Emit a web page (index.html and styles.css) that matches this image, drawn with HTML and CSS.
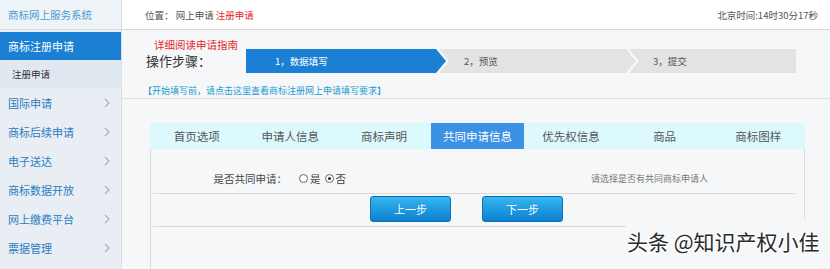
FILE: index.html
```html
<!DOCTYPE html>
<html lang="zh-CN">
<head>
  <meta charset="UTF-8">
  <title>商标网上服务系统</title>
  <link rel="stylesheet" href="styles.css">
</head>
<body>
  <div class="sidebar">
    <div class="brand">商标网上服务系统</div>
    <div class="menu-active">商标注册申请</div>
    <div class="menu-sub">注册申请</div>
    <div class="menu-item">国际申请<svg width="6" height="10" viewBox="0 0 6 10"><polyline points="1,1 5,5 1,9" fill="none" stroke="#a9b2ba" stroke-width="1.2"/></svg></div>
    <div class="menu-item">商标后续申请<svg width="6" height="10" viewBox="0 0 6 10"><polyline points="1,1 5,5 1,9" fill="none" stroke="#a9b2ba" stroke-width="1.2"/></svg></div>
    <div class="menu-item">电子送达<svg width="6" height="10" viewBox="0 0 6 10"><polyline points="1,1 5,5 1,9" fill="none" stroke="#a9b2ba" stroke-width="1.2"/></svg></div>
    <div class="menu-item">商标数据开放<svg width="6" height="10" viewBox="0 0 6 10"><polyline points="1,1 5,5 1,9" fill="none" stroke="#a9b2ba" stroke-width="1.2"/></svg></div>
    <div class="menu-item">网上缴费平台<svg width="6" height="10" viewBox="0 0 6 10"><polyline points="1,1 5,5 1,9" fill="none" stroke="#a9b2ba" stroke-width="1.2"/></svg></div>
    <div class="menu-item">票据管理<svg width="6" height="10" viewBox="0 0 6 10"><polyline points="1,1 5,5 1,9" fill="none" stroke="#a9b2ba" stroke-width="1.2"/></svg></div>
  </div>

  <div class="main">
    <div class="topbar">
      <div class="crumb">位置： 网上申请 <span class="red">注册申请</span></div>
      <div class="clock">北京时间:14时30分17秒</div>
    </div>

    <div class="steps">
      <div class="steps-left">
        <div class="guide">详细阅读申请指南</div>
        <div class="steps-label">操作步骤：</div>
      </div>
      <div class="step-bar">
        <div class="step step-first active">1，数据填写</div>
        <div class="step step-mid">2，预览</div>
        <div class="step step-last">3，提交</div>
      </div>
    </div>

    <div class="notice">【开始填写前，请点击这里查看商标注册网上申请填写要求】</div>

    <div class="form-box">
      <div class="tabs">
        <div class="tab">首页选项</div>
        <div class="tab">申请人信息</div>
        <div class="tab">商标声明</div>
        <div class="tab tab-active">共同申请信息</div>
        <div class="tab">优先权信息</div>
        <div class="tab">商品</div>
        <div class="tab">商标图样</div>
      </div>
      <div class="panel">
        <div class="form-row">
          <div class="field-label">是否共同申请：</div>
          <div class="radios">
            <span class="radio"></span>是
            <span class="radio checked"></span>否
          </div>
          <div class="hint">请选择是否有共同商标申请人</div>
        </div>
        <div class="button-row">
          <button class="btn">上一步</button>
          <button class="btn">下一步</button>
        </div>
      </div>
    </div>
  </div>

  <div class="watermark">头条 @知识产权小佳</div>
</body>
</html>
```

FILE: styles.css
```css
html, body {
  margin: 0;
  padding: 0;
  height: 100%;
  overflow: hidden;
  font-family: "Noto Sans CJK SC", "Noto Sans", sans-serif;
}

body {
  display: flex;
  background: #f5f7f9;
  position: relative;
}

/* sidebar */

.sidebar {
  width: 121px;
  flex: none;
  background: #e8eef4;
  border-right: 1px solid #d7dee5;
}

.brand {
  height: 29px;
  line-height: 29px;
  padding-left: 8px;
  font-size: 10.5px;
  color: #4b9ad2;
  background: #eef3f7;
  border-bottom: 1px solid #d5dbe0;
  margin-bottom: 2px;
}

.menu-active {
  height: 28px;
  line-height: 28px;
  padding-left: 8px;
  font-size: 11px;
  color: #fff;
  background: #1b7fd4;
}

.menu-sub {
  height: 28px;
  line-height: 28px;
  padding-left: 12px;
  font-size: 9.5px;
  color: #333;
  background: #e1e9f0;
}

.menu-item {
  height: 29px;
  display: flex;
  align-items: center;
  justify-content: space-between;
  padding: 0 11px 0 8px;
  font-size: 11px;
  color: #2c7dc0;
}

/* main */

.main {
  flex: 1;
  display: flex;
  flex-direction: column;
}

.topbar {
  height: 29px;
  background: #fff;
  border-bottom: 1px solid #d6d6d6;
  display: flex;
  align-items: center;
  justify-content: space-between;
  padding: 0 12px 0 23px;
  font-size: 9.5px;
  color: #555;
}

.red {
  color: #e42a2a;
}

.steps {
  display: flex;
  align-items: flex-end;
  padding: 8px 0 0 24px;
}

.steps-left {
  width: 100px;
}

.guide {
  line-height: 14px;
  padding-left: 8px;
  font-size: 10.5px;
  color: #e42a2a;
}

.steps-label {
  line-height: 18px;
  padding-bottom: 3px;
  font-size: 13px;
  color: #333;
}

.step-bar {
  display: flex;
  width: 550px;
  height: 24px;
}

.step {
  height: 24px;
  line-height: 24px;
  font-size: 9.5px;
  color: #555;
  background: #e3e3e3;
}

.step.active {
  color: #fff;
  background: #1b7fd4;
}

.step-first {
  width: 200px;
  padding-left: 29px;
  box-sizing: border-box;
  clip-path: polygon(0 0, 190px 0, 200px 50%, 190px 100%, 0 100%);
}

.step-mid {
  width: 197px;
  margin-left: -7px;
  padding-left: 25px;
  box-sizing: border-box;
  clip-path: polygon(0 0, 187px 0, 197px 50%, 187px 100%, 0 100%, 10px 50%);
}

.step-last {
  flex: 1;
  margin-left: -7px;
  padding-left: 24px;
  clip-path: polygon(0 0, 100% 0, 100% 100%, 0 100%, 10px 50%);
}

.notice {
  margin-top: 11px;
  line-height: 14px;
  padding-left: 21px;
  font-size: 9px;
  color: #1e9bd2;
  border-bottom: 1px solid #dcdfe2;
}

.form-box {
  margin: 24px 25px 0 28px;
  flex: 1;
  display: flex;
  flex-direction: column;
}

.tabs {
  display: grid;
  grid-template-columns: repeat(7, 1fr);
  height: 26px;
  background: #dcfafd;
}

.tab {
  line-height: 26px;
  text-align: center;
  font-size: 11.5px;
  color: #555;
}

.tab-active {
  background: #3b91e4;
  color: #fff;
}

.panel {
  flex: 1;
  border-left: 1px solid #dadada;
  border-right: 1px solid #dadada;
  padding: 0 9px 0 2px;
}

.form-row {
  display: flex;
  align-items: center;
  padding: 22px 0 7px;
  border-bottom: 1px solid #d8dadc;
  font-size: 10.5px;
  color: #444;
}

.field-label {
  width: 134px;
  text-align: right;
}

.radios {
  display: flex;
  align-items: center;
  gap: 2px;
  margin-left: 10px;
  width: 294px;
}

.radio {
  width: 7px;
  height: 7px;
  border: 1px solid #666;
  border-radius: 50%;
  background: #fff;
  margin-left: 2px;
  position: relative;
}

.radio.checked::after {
  content: "";
  position: absolute;
  left: 2px;
  top: 2px;
  width: 3px;
  height: 3px;
  border-radius: 50%;
  background: #222;
}

.hint {
  font-size: 9px;
  color: #777;
}

.button-row {
  display: flex;
  gap: 31px;
  padding: 2px 0 4px 217px;
  border-bottom: 1px solid #d8dadc;
}

.btn {
  width: 81px;
  height: 26px;
  padding: 0;
  font-family: inherit;
  font-size: 11px;
  color: #fff;
  border: 1px solid #0d72b9;
  border-radius: 3px;
  background: linear-gradient(#35b6f0, #0c80d0);
}

.watermark {
  position: absolute;
  right: 0;
  bottom: 0;
  width: 203px;
  height: 50px;
  line-height: 44px;
  padding-left: 1px;
  background: #f5f7f9;
  font-size: 21px;
  color: #2a2a2a;
  text-shadow: 1px 1px 0 #fff, -1px -1px 0 #fff, 1px -1px 0 #fff, -1px 1px 0 #fff;
}
```
